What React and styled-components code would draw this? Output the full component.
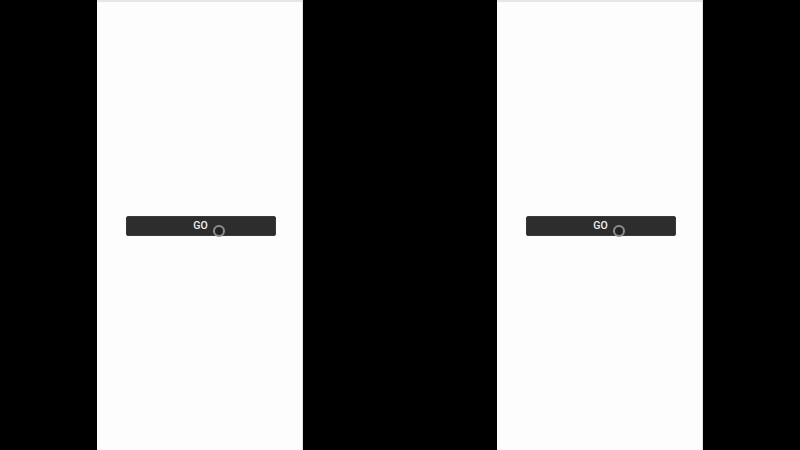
import styled, {createGlobalStyle} from "styled-components";

const Global = createGlobalStyle`
  html, body {
    margin: 0;
    padding: 0;
    background: #000;
  }
  #root {
    height: 450px;
  }
`;

const Stage = styled.div`
  display: grid;
  grid-template-columns: 1fr 1fr;
  height: 450px;
  background: #000;
`;

const Half = styled.div`
  display: flex;
  justify-content: center;
`;

const Screen = styled.div`
  width: 206px;
  height: 100%;
  background: #fdfdfd;
  border-top: 2px solid #e6e6e6;
  border-right: 1px solid #e2e2e2;
  box-sizing: border-box;
  display: flex;
  align-items: center;
  justify-content: center;
  padding: 0 0 0 2px;
`;

const GoButton = styled.button`
  position: relative;
  width: 150px;
  height: 20px;
  border: 1px solid #3a3a3a;
  border-radius: 2px;
  background: #2d2d2d;
  color: #f2f2f2;
  font-family: Roboto, "Liberation Sans", Arial, sans-serif;
  font-size: 10.5px;
  font-weight: 500;
  line-height: 18px;
  padding: 0 0 2px;
  cursor: pointer;
`;

const Touch = styled.span`
  position: absolute;
  left: 86px;
  top: 8px;
  width: 8px;
  height: 8px;
  border-radius: 50%;
  border: 2px solid #8f8f8f;
  background: #222;
`;

const Phone = () => (
  <Half>
    <Screen>
      <GoButton>
        GO
        <Touch />
      </GoButton>
    </Screen>
  </Half>
);

const App = () => (
  <>
    <Global />
    <Stage>
      <Phone />
      <Phone />
    </Stage>
  </>
);

export default App;
